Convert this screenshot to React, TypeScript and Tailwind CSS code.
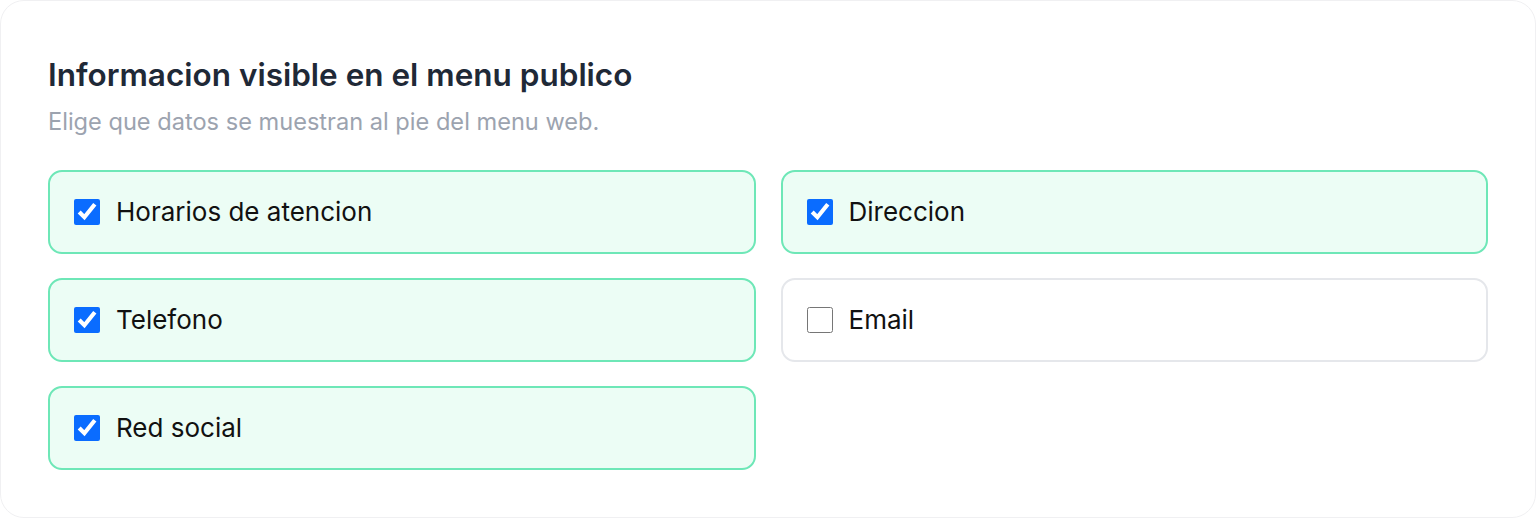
import { useState } from 'react'

const OPTIONS = [
  { key: 'horarios', label: 'Horarios de atencion', on: true },
  { key: 'direccion', label: 'Direccion', on: true },
  { key: 'telefono', label: 'Telefono', on: true },
  { key: 'email', label: 'Email', on: false },
  { key: 'red', label: 'Red social', on: true },
]

export default function App() {
  const [checked, setChecked] = useState<Record<string, boolean>>(
    Object.fromEntries(OPTIONS.map((o) => [o.key, o.on]))
  )

  return (
    <div className="w-[1536px] h-[518px] bg-white font-['Inter',sans-serif]">
      <div className="h-full border border-[#f0f0f2] rounded-[24px] px-[47px] pt-[54px] pb-12">
        <h2 className="text-[31.5px] leading-10 font-semibold text-[#1f2937]">
          Informacion visible en el menu publico
        </h2>
        <p className="mt-3 text-[23.6px] leading-[30px] text-[#9ca3af]">Elige que datos se muestran al pie del menu web.</p>
        <div className="mt-[33px] grid grid-cols-2 gap-x-[25px] gap-y-6">
          {OPTIONS.map((o) => {
            const on = checked[o.key]
            return (
              <label
                key={o.key}
                className={
                  on
                    ? 'flex items-center gap-4 h-[84px] px-6 rounded-[14px] border-2 border-[#6ee7b7] bg-[#ecfdf5] cursor-pointer'
                    : 'flex items-center gap-4 h-[84px] px-6 rounded-[14px] border-2 border-[#e5e7eb] bg-white cursor-pointer'
                }
              >
                <input
                  type="checkbox"
                  checked={on}
                  onChange={() => setChecked((c) => ({ ...c, [o.key]: !c[o.key] }))}
                  className="w-[26px] h-[26px] m-0 accent-[#0a6cff]"
                />
                <span className="text-[26px] leading-8 text-[#111111]">{o.label}</span>
              </label>
            )
          })}
        </div>
      </div>
    </div>
  )
}
